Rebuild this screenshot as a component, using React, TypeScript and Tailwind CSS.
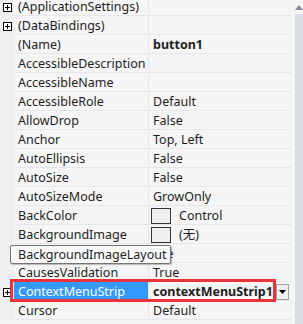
import React from 'react'

type Row = {
  name: string
  value?: string
  expand?: boolean
  bold?: boolean
  swatch?: boolean
  selected?: boolean
}

const rows: Row[] = [
  { name: '(ApplicationSettings)', expand: true },
  { name: '(DataBindings)', expand: true },
  { name: '(Name)', value: 'button1', bold: true },
  { name: 'AccessibleDescription' },
  { name: 'AccessibleName' },
  { name: 'AccessibleRole', value: 'Default' },
  { name: 'AllowDrop', value: 'False' },
  { name: 'Anchor', value: 'Top, Left' },
  { name: 'AutoEllipsis', value: 'False' },
  { name: 'AutoSize', value: 'False' },
  { name: 'AutoSizeMode', value: 'GrowOnly' },
  { name: 'BackColor', value: 'Control', swatch: true },
  { name: 'BackgroundImage', value: '(无)', swatch: true },
  { name: 'BackgroundImageLayout', value: 'Tile' },
  { name: 'CausesValidation', value: 'True' },
  { name: 'ContextMenuStrip', value: 'contextMenuStrip1', expand: true, bold: true, selected: true },
  { name: 'Cursor', value: 'Default' },
]

const PlusBox = () => (
  <span className="flex h-[9px] w-[9px] items-center justify-center border border-black bg-white">
    <svg width="7" height="7" viewBox="0 0 7 7">
      <path d="M1 3.5H6M3.5 1V6" stroke="#000" strokeWidth="1" />
    </svg>
  </span>
)

export default function App() {
  return (
    <div
      className="relative h-[324px] w-[303px] overflow-hidden bg-[#f5f5f5] text-[12.5px] leading-[14px] text-[#1e1e1e]"
      style={{ fontFamily: '"Noto Sans", "Noto Sans CJK SC", sans-serif' }}
    >
      <div className="flex">
        <div className="mt-[-3px] w-[291px]">
          {rows.map((r, i) => (
            <div key={i} className="flex h-[19px]">
              <div className="flex w-[14px] items-center justify-center bg-[#efeff2] pt-[1px]">
                {r.expand && <PlusBox />}
              </div>
              <div
                className={
                  r.selected
                    ? 'flex w-[134px] items-center border-b border-[#f5f5f5] bg-[#3399ff] pt-[1px] pl-[4px] text-white'
                    : 'flex w-[134px] items-center border-b border-[#e6e6ea] pt-[1px] pl-[4px]'
                }
              >
                <span className="whitespace-nowrap">{r.name}</span>
              </div>
              <div className="w-px bg-[#e6e6ea]" />
              <div className="flex flex-1 items-center border-b border-[#e6e6ea] pt-[1px] pl-[4px]">
                {r.swatch && (
                  <span className="mr-[8px] ml-[-2px] h-[16px] w-[20px] border border-[#333] bg-[#f0f0f0]" />
                )}
                {r.value && (
                  <span className={r.bold ? 'whitespace-nowrap font-bold' : 'whitespace-nowrap'}>{r.value}</span>
                )}
                {r.selected && (
                  <span className="mr-[2px] ml-auto flex h-[16px] w-[13px] items-center justify-center border border-[#a0a0a0] bg-[#f0f0f0]">
                    <svg width="7" height="4" viewBox="0 0 7 4">
                      <path d="M0 0H7L3.5 4Z" fill="#000" />
                    </svg>
                  </span>
                )}
              </div>
            </div>
          ))}
        </div>
        <div className="ml-[4px] flex w-[8px] flex-col">
          <div className="flex h-[14px] items-center justify-center pt-[1px]">
            <svg width="8" height="5" viewBox="0 0 8 5">
              <path d="M0 5L4 0L8 5Z" fill="#868999" />
            </svg>
          </div>
          <div className="h-[310px] bg-[#dcdce4]" />
        </div>
      </div>

      {/* tooltip over BackgroundImageLayout */}
      <div className="absolute top-[245px] left-[10px] flex h-[19px] w-[161px] items-center rounded-[2px] border border-[#767676] bg-[#f9f9f9] pl-[7px] shadow-[1px_1px_1px_rgba(0,0,0,0.25)]">
        <span className="whitespace-nowrap">BackgroundImageLayout</span>
      </div>

      {/* red highlight */}
      <div className="absolute top-[279px] left-[10px] h-[23px] w-[266px] border-[3px] border-[#e8333a]" />
    </div>
  )
}
